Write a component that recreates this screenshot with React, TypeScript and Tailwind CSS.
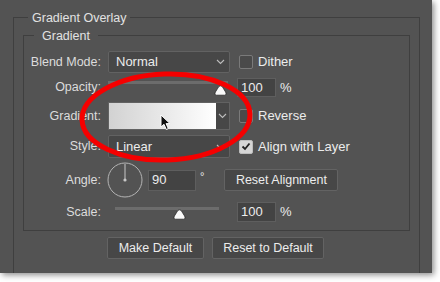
import React from "react";

const font = { fontFamily: '"Liberation Sans", Arial, sans-serif' };

function Chevron() {
  return (
    <svg width="9" height="6" viewBox="0 0 9 6" className="shrink-0">
      <path d="M1 1 L4.5 4.5 L8 1" fill="none" stroke="#bdbdbd" strokeWidth="1.1" />
    </svg>
  );
}

function Select({ value }: { value: string }) {
  return (
    <div className="flex h-full w-[122px] items-center justify-between rounded-[2px] border border-[#626262] bg-[#474747] pl-[7px] pr-[4px]">
      <span className="text-[13px] text-[#ececec]">{value}</span>
      <Chevron />
    </div>
  );
}

function Check({ checked, label }: { checked?: boolean; label: string }) {
  return (
    <div className="ml-[9px] flex items-center gap-[5px]">
      <div
        className={
          checked
            ? "flex h-[14px] w-[14px] items-center justify-center rounded-[2px] border border-[#bdbdbd] bg-[#d6d6d6]"
            : "h-[14px] w-[14px] rounded-[2px] border border-[#7a7a7a] bg-[#4a4a4a]"
        }
      >
        {checked && (
          <svg width="10" height="9" viewBox="0 0 10 9">
            <path d="M1.5 4.5 L4 7 L8.5 1.5" fill="none" stroke="#222" strokeWidth="1.8" />
          </svg>
        )}
      </div>
      <span className="text-[13px] text-[#ececec]">{label}</span>
    </div>
  );
}

function Thumb() {
  return (
    <svg width="13" height="11" viewBox="0 0 13 11">
      <path
        d="M6.5 0.8 C7.6 0.8 8.4 2 9.6 3.8 L11.6 7 C12.5 8.5 12 10.2 10.6 10.2 L2.4 10.2 C1 10.2 0.5 8.5 1.4 7 L3.4 3.8 C4.6 2 5.4 0.8 6.5 0.8 Z"
        fill="#fafafa"
        stroke="#2a2a2a"
        strokeWidth="0.8"
      />
    </svg>
  );
}

function NumInput({ value, w }: { value: string; w: number }) {
  return (
    <div
      className="flex h-full items-center border border-[#5e5e5e] bg-[#434343] pl-[3px] text-[13px] text-[#ececec]"
      style={{ width: w }}
    >
      {value}
    </div>
  );
}

function Label({ children }: { children: React.ReactNode }) {
  return (
    <div className="w-[78px] shrink-0 pr-[1px] text-right text-[12.5px] text-[#dcdcdc]">{children}</div>
  );
}

function Button({ children, w }: { children: React.ReactNode; w: number }) {
  return (
    <div
      className="flex h-[22px] items-center justify-center rounded-[2px] border border-[#636363] bg-[#474747] text-[12.5px] text-[#ececec]"
      style={{ width: w }}
    >
      {children}
    </div>
  );
}

export default function App() {
  return (
    <div className="h-[282px] w-[440px] bg-white" style={font}>
      <div className="relative h-[273px] w-[432px] overflow-hidden bg-[#535353] shadow-[2px_2px_6px_rgba(0,0,0,0.45)]">
        <fieldset className="ml-[13px] mt-[8px] h-[300px] w-[407px] border-l border-r border-t border-[#3f3f3f] pl-[9px] pr-[9px]">
          <legend className="ml-[5px] px-[4px] pt-[2px] text-[12.5px] leading-[16px] text-[#e2e2e2]">Gradient Overlay</legend>
          <fieldset className="border border-[#3f3f3f]">
            <legend className="ml-[10px] px-[8px] pt-[2px] text-[12.5px] leading-[16px] text-[#e2e2e2]">Gradient</legend>
            <div className="flex flex-col pb-[7px]">
              {/* Blend mode */}
              <div className="mt-[7px] flex h-[22px] items-center">
                <Label>Blend Mode:</Label>
                <div className="ml-[6px] h-full">
                  <Select value="Normal" />
                </div>
                <Check label="Dither" />
              </div>
              {/* Opacity */}
              <div className="mt-[3px] flex h-[23px] items-center">
                <Label>Opacity:</Label>
                <div className="ml-[6px] flex h-full w-[122px] flex-col">
                  <div className="mt-[5px] h-[3px] w-[120px] bg-[#6c6c6c]" />
                  <div className="ml-[106px] mt-[1px]">
                    <Thumb />
                  </div>
                </div>
                <div className="ml-[7px] h-[19px]">
                  <NumInput value="100" w={39} />
                </div>
                <span className="ml-[4px] text-[13px] text-[#ececec]">%</span>
              </div>
              {/* Gradient */}
              <div className="mt-[3px] flex h-[28px] items-center">
                <Label>Gradient:</Label>
                <div className="ml-[6px] flex h-full w-[122px] border border-[#626262]">
                  <div className="h-full w-[107px] bg-[linear-gradient(to_right,#d2d2d2,#e6e6e6_45%,#ffffff)]" />
                  <div className="flex h-full flex-1 items-center justify-center bg-[#474747]">
                    <Chevron />
                  </div>
                </div>
                <Check label="Reverse" />
              </div>
              {/* Style */}
              <div className="mt-[5px] flex h-[23px] items-center">
                <Label>Style:</Label>
                <div className="ml-[6px] h-full">
                  <Select value="Linear" />
                </div>
                <Check checked label="Align with Layer" />
              </div>
              {/* Angle */}
              <div className="mt-[4px] flex h-[36px] items-center">
                <Label>Angle:</Label>
                <svg width="36" height="36" viewBox="0 0 36 36" className="ml-[5px] shrink-0">
                  <circle cx="18" cy="18" r="17" fill="none" stroke="#b4b4b4" strokeWidth="1" />
                  <line x1="18" y1="18" x2="18" y2="2" stroke="#c8c8c8" strokeWidth="1" />
                  <circle cx="18" cy="18" r="1.6" fill="#c8c8c8" />
                </svg>
                <div className="ml-[5px] h-[21px]">
                  <NumInput value="90" w={48} />
                </div>
                <span className="ml-[4px] -mt-[8px] text-[11px] text-[#ececec]">°</span>
                <div className="ml-[20px]">
                  <Button w={114}>Reset Alignment</Button>
                </div>
              </div>
              {/* Scale */}
              <div className="mt-[3px] flex h-[22px] items-center">
                <Label>Scale:</Label>
                <div className="ml-[6px] flex h-full w-[122px] flex-col">
                  <div className="ml-[7px] mt-[6px] h-[3px] w-[104px] bg-[#6c6c6c]" />
                  <div className="ml-[65px] -mt-[1px]">
                    <Thumb />
                  </div>
                </div>
                <div className="ml-[7px] h-[20px]">
                  <NumInput value="100" w={39} />
                </div>
                <span className="ml-[4px] text-[13px] text-[#ececec]">%</span>
              </div>
            </div>
          </fieldset>
          <div className="ml-[84px] mt-[6px] flex gap-[8px]">
            <Button w={97}>Make Default</Button>
            <Button w={112}>Reset to Default</Button>
          </div>
        </fieldset>

        {/* cursor */}
        <svg width="12" height="17" viewBox="0 0 12 17" className="absolute left-[160px] top-[114px]">
          <path d="M1 1 L1 13 L4 10.3 L6.3 15.5 L8.3 14.6 L6.1 9.6 L10 9.6 Z" fill="#111" stroke="#fff" strokeWidth="1" />
        </svg>

        {/* red ellipse annotation */}
        <svg width="432" height="273" viewBox="0 0 432 273" className="pointer-events-none absolute left-0 top-0">
          <ellipse
            cx="166"
            cy="117"
            rx="84"
            ry="43"
            fill="none"
            stroke="#f50000"
            strokeWidth="5"
            transform="rotate(-2 166 117)"
          />
        </svg>
      </div>
    </div>
  );
}
